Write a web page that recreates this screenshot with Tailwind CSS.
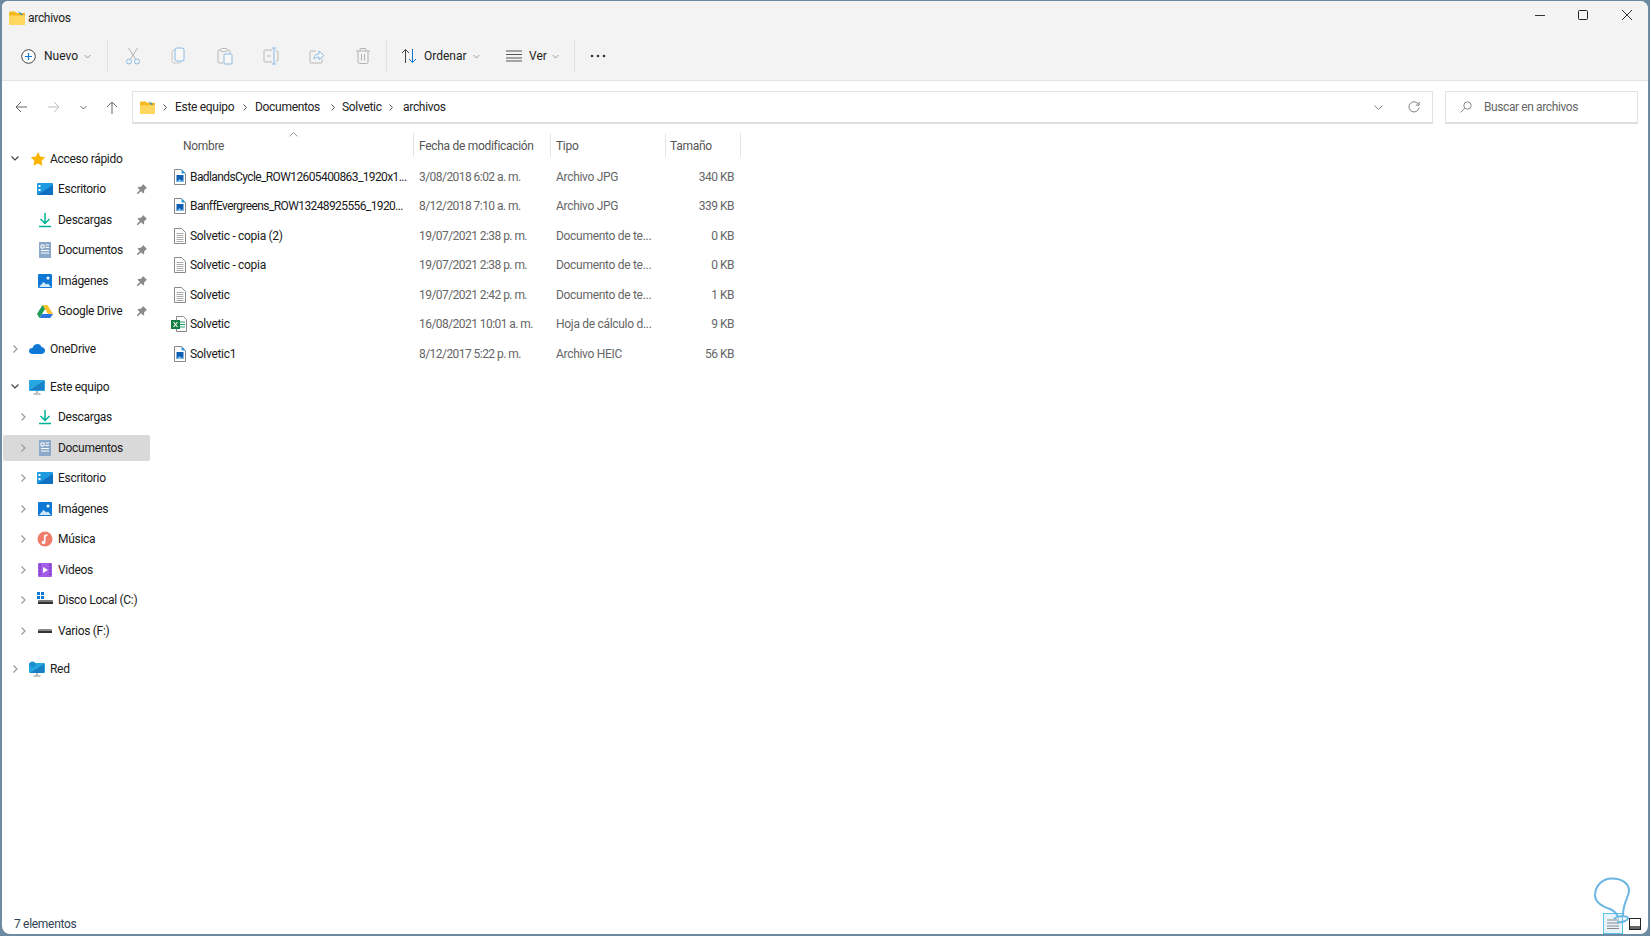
<!doctype html>
<html>
<head>
  <meta charset="UTF-8">
  <script src="https://cdn.jsdelivr.net/npm/@tailwindcss/browser@4"></script>
</head>
<body class="bg-[#6d8ba0] overflow-hidden font-['Roboto',sans-serif] text-[12px] text-[#1a1a1a] whitespace-nowrap tracking-[-0.3px]">

<div class="relative w-[1650px] h-[936px] pl-[2px] pr-[2px] pb-[2px] pt-[1px]">
<div class="relative flex flex-col h-full bg-white rounded-tl-[6px] rounded-tr-[8px] rounded-br-[8px] rounded-bl-[8px] overflow-hidden">

  <!-- title + toolbar -->
  <div class="bg-[#f3f3f3] h-[80px] shrink-0 border-b border-[#e3e3e3]">
    <div class="h-[34px] flex items-center pl-[7px]">
      <svg width="16" height="16" viewBox="0 0 16 16"><path d="M0 3Q0 1.500 1.500 1.500H6L7.500 3H16v10.500q0 1.500-1.500 1.500h-13Q0 15 0 13.500z" fill="#f5b81f"/><path d="M0 5.500h16v8q0 1.500-1.500 1.500h-13Q0 15 0 13.500z" fill="#ffd75e"/><path d="M9 1l5 3.500-2 .8z" fill="#1f93c9"/></svg>
      <span class="ml-[3px] text-[#222]">archivos</span>
    </div>
    <div class="absolute top-0 left-0 w-full h-[34px]">
      <svg class="absolute left-[1533px] top-[12px]" width="10" height="10" viewBox="0 0 10 10"><path d="M0 2.500h10" stroke="#333"/></svg>
      <svg class="absolute left-[1576px] top-[9px]" width="10" height="10" viewBox="0 0 10 10"><rect x=".5" y=".5" width="9" height="9" rx="1" fill="none" stroke="#222"/></svg>
      <svg class="absolute left-[1620px] top-[9px]" width="10" height="10" viewBox="0 0 10 10"><path d="M0 0l10 10M10 0L0 10" stroke="#333"/></svg>
    </div>

    <div class="flex items-center h-[40px] pt-[2px] tracking-normal">
      <div class="flex items-center w-[105px] pl-[19px]">
        <svg width="15" height="15" viewBox="0 0 15 15"><circle cx="7.500" cy="7.500" r="6.800" fill="#fff" stroke="#444"/><path d="M7.500 4v7M4 7.500h7" stroke="#0f78d4" stroke-width="1.200"/></svg>
        <span class="ml-[8px] text-[#222]">Nuevo</span>
        <svg class="ml-[6px]" width="7" height="5" viewBox="0 0 7 5"><path d="M.5 1l3 3 3-3" fill="none" stroke="#999"/></svg>
      </div>
      <div class="w-px h-[32px] bg-[#e2e2e2]"></div>
      <div class="flex items-center w-[278px] pl-[17px] gap-[30px] opacity-45">
        <svg width="16" height="18" viewBox="0 0 16 18"><path d="M3.500 1l7 11M12.500 1l-7 11" stroke="#666" fill="none"/><circle cx="4" cy="14.500" r="2.500" fill="none" stroke="#0f78d4"/><circle cx="12" cy="14.500" r="2.500" fill="none" stroke="#0f78d4"/></svg>
        <svg width="16" height="18" viewBox="0 0 16 18"><rect x="1" y="3" width="9" height="13" rx="2" fill="none" stroke="#999"/><rect x="4" y="1" width="9" height="13" rx="2" fill="#fff" stroke="#0f78d4"/></svg>
        <svg width="16" height="18" viewBox="0 0 16 18"><path d="M4 3H2q-1 0-1 1v11q0 1 1 1h4M10 3h2q1 0 1 1v3" fill="none" stroke="#777"/><rect x="4" y="1.500" width="6" height="3" rx="1" fill="#fff" stroke="#777"/><rect x="7" y="7" width="8" height="10" rx="1" fill="#fff" stroke="#0f78d4"/></svg>
        <svg width="16" height="18" viewBox="0 0 16 18"><path d="M9 3H2q-1 0-1 1v10q0 1 1 1h7M13 4h1q1 0 1 1v8q0 1-1 1h-1" fill="none" stroke="#777"/><path d="M11 1v16M9 1h4M9 17h4" stroke="#0f78d4" fill="none"/><path d="M4 9h4" stroke="#777"/></svg>
        <svg width="16" height="18" viewBox="0 0 16 18"><path d="M7 4H2q-1 0-1 1v10q0 1 1 1h10q1 0 1-1v-3" fill="none" stroke="#777"/><path d="M5 12q0-5 5-5V4l5 4.500-5 4V10q-3 0-5 2z" fill="#fff" stroke="#0f78d4"/></svg>
        <svg width="16" height="18" viewBox="0 0 16 18"><path d="M1 4h14M5 4V2.500Q5 1.500 6 1.500h4q1 0 1 1V4M3 4v11q0 1.500 1.500 1.500h7Q13 16.500 13 15V4M6.500 7v6.500M9.500 7v6.500" fill="none" stroke="#666"/></svg>
      </div>
      <div class="w-px h-[32px] bg-[#e2e2e2]"></div>
      <div class="flex items-center w-[110px] pl-[14px]">
        <svg width="16" height="16" viewBox="0 0 16 16"><path d="M4.500 15V1.500M1 5l3.500-3.500L8 5" fill="none" stroke="#444"/><path d="M11.500 1v13.500M8 11l3.500 3.500L15 11" fill="none" stroke="#0f78d4"/></svg>
        <span class="ml-[7px] w-[43px] text-[#222]">Ordenar</span>
        <svg class="ml-[6px]" width="7" height="5" viewBox="0 0 7 5"><path d="M.5 1l3 3 3-3" fill="none" stroke="#999"/></svg>
      </div>
      <div class="flex items-center w-[77px] pl-[9px]">
        <svg width="16" height="12" viewBox="0 0 16 12"><path d="M0 1h16M0 4.500h16M0 8h16M0 11h16" stroke="#555"/></svg>
        <span class="ml-[7px] w-[17px] text-[#222]">Ver</span>
        <svg class="ml-[6px]" width="7" height="5" viewBox="0 0 7 5"><path d="M.5 1l3 3 3-3" fill="none" stroke="#999"/></svg>
      </div>
      <div class="w-px h-[32px] bg-[#e2e2e2]"></div>
      <svg class="ml-[15px]" width="16" height="4" viewBox="0 0 16 4"><circle cx="2" cy="2" r="1.300" fill="#333"/><circle cx="8" cy="2" r="1.300" fill="#333"/><circle cx="14" cy="2" r="1.300" fill="#333"/></svg>
    </div>
  </div>

  <!-- address row -->
  <div class="flex items-center h-[50px] shrink-0 pl-[13px] pt-[2px]">
    <svg width="12" height="12" viewBox="0 0 12 12"><path d="M6 1L1 6l5 5M1 6h11" fill="none" stroke="#666"/></svg>
    <svg class="ml-[21px]" width="12" height="12" viewBox="0 0 12 12"><path d="M6 1l5 5-5 5M11 6H0" fill="none" stroke="#bbb"/></svg>
    <svg class="ml-[20px]" width="7" height="5" viewBox="0 0 7 5"><path d="M.5 1l3 3 3-3" fill="none" stroke="#666"/></svg>
    <svg class="ml-[19px]" width="12" height="13" viewBox="0 0 12 13"><path d="M1 6l5-5 5 5M6 1v12" fill="none" stroke="#666"/></svg>
    <div class="ml-[14px] w-[1301px] h-[32px] border border-[#e3e3e3] shadow-[0_1px_0_#ddd] flex items-center pl-[7px] text-[#222]">
      <svg width="15" height="15" viewBox="0 0 16 16"><path d="M0 3Q0 1.500 1.500 1.500H6L7.500 3H16v10.500q0 1.500-1.500 1.500h-13Q0 15 0 13.500z" fill="#f5b81f"/><path d="M0 5.500h16v8q0 1.500-1.500 1.500h-13Q0 15 0 13.500z" fill="#ffd75e"/><path d="M9 1l5 3.500-2 .8z" fill="#1f93c9"/></svg>
      <svg class="ml-[8px]" width="4" height="7" viewBox="0 0 4 7"><path d="M.5.5l3 3-3 3" fill="none" stroke="#555"/></svg>
      <span class="ml-[8px] w-[68px]">Este equipo</span>
      <svg width="4" height="7" viewBox="0 0 4 7"><path d="M.5.5l3 3-3 3" fill="none" stroke="#555"/></svg>
      <span class="ml-[8px] w-[76px]">Documentos</span>
      <svg width="4" height="7" viewBox="0 0 4 7"><path d="M.5.5l3 3-3 3" fill="none" stroke="#555"/></svg>
      <span class="ml-[7px] w-[47px]">Solvetic</span>
      <svg width="4" height="7" viewBox="0 0 4 7"><path d="M.5.5l3 3-3 3" fill="none" stroke="#555"/></svg>
      <span class="ml-[10px]">archivos</span>
      <svg class="ml-auto" width="9" height="5" viewBox="0 0 9 5"><path d="M.5.5l4 4 4-4" fill="none" stroke="#888"/></svg>
      <svg class="ml-[25px] mr-[12px]" width="12" height="12" viewBox="0 0 13 13"><path d="M11.500 4A5.500 5.500 0 1 0 12 7" fill="none" stroke="#777"/><path d="M12 1v3.500H8.500" fill="none" stroke="#777"/></svg>
    </div>
    <div class="ml-[12px] w-[193px] h-[32px] border border-[#e3e3e3] shadow-[0_1px_0_#ddd] flex items-center pl-[14px] text-[#666] tracking-[-0.4px]">
      <svg width="12" height="12" viewBox="0 0 12 12"><circle cx="7.500" cy="4.500" r="3.700" fill="none" stroke="#888"/><path d="M4.800 7.200L.5 11.500" stroke="#888"/></svg>
      <span class="ml-[12px]">Buscar en archivos</span>
    </div>
  </div>

  <!-- body -->
  <div class="flex flex-1 min-h-0">
    <!-- nav pane -->
    <nav class="w-[151px] shrink-0 pt-[12.5px]">
      <div class="flex items-center h-[30.5px]">
        <svg class="ml-[9px]" width="8" height="5" viewBox="0 0 8 5"><path d="M.5.5L4 4 7.500.5" fill="none" stroke="#444" stroke-width="1.200"/></svg>
        <svg class="ml-[11px]" width="16" height="16" viewBox="0 0 16 16"><path d="M8 1l2.200 4.600 5 .7-3.600 3.500.9 5L8 12.400l-4.500 2.400.9-5L.8 6.300l5-.7z" fill="#fbb400"/></svg>
        <span class="ml-[4px]">Acceso rápido</span>
      </div>
      <div class="flex items-center h-[30.5px] pl-[35px]">
        <svg width="16" height="14" viewBox="0 0 16 14"><rect y="1" width="16" height="12" rx="1" fill="#1e9be0"/><path d="M0 13L16 3v9q0 1-1 1z" fill="#0f6fc0"/><rect x="1.500" y="3" width="2" height="2" fill="#fff"/><rect x="1.500" y="7" width="2" height="2" fill="#fff"/></svg>
        <span class="ml-[5px] w-[79px]">Escritorio</span>
        <svg width="10" height="10" viewBox="0 0 10 10"><path d="M6 0l4 4-1 .5-2 2 .3 2-1 1-2.200-2.300L1 10l-1 0 0-1 2.800-3.100L.6 3.700l1-1 2 .3 2-2z" fill="#8a8a8a"/></svg>
      </div>
      <div class="flex items-center h-[30.5px] pl-[35px]">
        <svg width="16" height="16" viewBox="0 0 16 16"><path d="M8 1v10M3.500 7L8 11.500 12.500 7M2 14.500h12" fill="none" stroke="#00b294" stroke-width="1.500"/></svg>
        <span class="ml-[5px] w-[79px]">Descargas</span>
        <svg width="10" height="10" viewBox="0 0 10 10"><path d="M6 0l4 4-1 .5-2 2 .3 2-1 1-2.200-2.300L1 10l-1 0 0-1 2.800-3.100L.6 3.700l1-1 2 .3 2-2z" fill="#8a8a8a"/></svg>
      </div>
      <div class="flex items-center h-[30.5px] pl-[35px]">
        <svg width="16" height="16" viewBox="0 0 16 16"><rect x="2" y="0" width="12" height="16" fill="#8aa8c8"/><path d="M4 3h3v3H4zM8.500 3H12M8.500 5.500H12M4 8.500h8M4 11h8" stroke="#fff" fill="none"/></svg>
        <span class="ml-[5px] w-[79px]">Documentos</span>
        <svg width="10" height="10" viewBox="0 0 10 10"><path d="M6 0l4 4-1 .5-2 2 .3 2-1 1-2.200-2.300L1 10l-1 0 0-1 2.800-3.100L.6 3.700l1-1 2 .3 2-2z" fill="#8a8a8a"/></svg>
      </div>
      <div class="flex items-center h-[30.5px] pl-[35px]">
        <svg width="16" height="16" viewBox="0 0 16 16"><rect x="1" y="1" width="14" height="14" rx="1" fill="#0f78d4"/><path d="M2 14l4.500-5 3 2.500 1.500-1 3 3.500z" fill="#cfe9fb"/><circle cx="11" cy="5" r="1.500" fill="#fff"/></svg>
        <span class="ml-[5px] w-[79px]">Imágenes</span>
        <svg width="10" height="10" viewBox="0 0 10 10"><path d="M6 0l4 4-1 .5-2 2 .3 2-1 1-2.200-2.300L1 10l-1 0 0-1 2.800-3.100L.6 3.700l1-1 2 .3 2-2z" fill="#8a8a8a"/></svg>
      </div>
      <div class="flex items-center h-[30.5px] pl-[35px]">
        <svg width="16" height="15" viewBox="0 0 16 15"><path d="M5.500 1h5L16 10h-5z" fill="#fbc02d"/><path d="M5.500 1L0 10l2.500 4L8 5z" fill="#1f9d55"/><path d="M2.500 14h10.800L16 10H5z" fill="#2b78e4"/></svg>
        <span class="ml-[5px] w-[79px]">Google Drive</span>
        <svg width="10" height="10" viewBox="0 0 10 10"><path d="M6 0l4 4-1 .5-2 2 .3 2-1 1-2.200-2.300L1 10l-1 0 0-1 2.800-3.100L.6 3.700l1-1 2 .3 2-2z" fill="#8a8a8a"/></svg>
      </div>

      <div class="flex items-center h-[30.5px] mt-[7px]">
        <svg class="ml-[11px]" width="5" height="8" viewBox="0 0 5 8"><path d="M.5.5L4 4 .5 7.500" fill="none" stroke="#999" stroke-width="1.200"/></svg>
        <svg class="ml-[11px]" width="16" height="11" viewBox="0 0 16 11"><path d="M4 11Q0 11 0 8t3.500-3Q5 1 8.500 1q3 0 4 3 3.500.5 3.500 3.500t-3.500 3.500z" fill="#0f78d4"/></svg>
        <span class="ml-[5px]">OneDrive</span>
      </div>
      <div class="flex items-center h-[30.5px] mt-[7.5px]">
        <svg class="ml-[9px]" width="8" height="5" viewBox="0 0 8 5"><path d="M.5.5L4 4 7.500.5" fill="none" stroke="#444" stroke-width="1.200"/></svg>
        <svg class="ml-[10px]" width="16" height="16" viewBox="0 0 16 16"><rect y="1" width="16" height="11" rx="1" fill="#27a6e0"/><path d="M1 11L15 2v9z" fill="#1a7fc4"/><path d="M8 12v2M4.500 15h7" stroke="#888" stroke-width="1.200"/></svg>
        <span class="ml-[5px]">Este equipo</span>
      </div>
      <div class="flex items-center h-[30.5px] pl-[19px]">
        <svg width="5" height="8" viewBox="0 0 5 8"><path d="M.5.5L4 4 .5 7.500" fill="none" stroke="#999" stroke-width="1.200"/></svg>
        <svg class="ml-[11px]" width="16" height="16" viewBox="0 0 16 16"><path d="M8 1v10M3.500 7L8 11.500 12.500 7M2 14.500h12" fill="none" stroke="#00b294" stroke-width="1.500"/></svg>
        <span class="ml-[5px]">Descargas</span>
      </div>
      <div class="h-[30.5px] py-[2px]">
        <div class="flex items-center h-full w-[147px] ml-[1px] pl-[18px] bg-[#d9d9d9] rounded-[2px]">
          <svg width="5" height="8" viewBox="0 0 5 8"><path d="M.5.5L4 4 .5 7.500" fill="none" stroke="#999" stroke-width="1.200"/></svg>
          <svg class="ml-[11px]" width="16" height="16" viewBox="0 0 16 16"><rect x="2" y="0" width="12" height="16" fill="#8aa8c8"/><path d="M4 3h3v3H4zM8.500 3H12M8.500 5.500H12M4 8.500h8M4 11h8" stroke="#fff" fill="none"/></svg>
          <span class="ml-[5px]">Documentos</span>
        </div>
      </div>
      <div class="flex items-center h-[30.5px] pl-[19px]">
        <svg width="5" height="8" viewBox="0 0 5 8"><path d="M.5.5L4 4 .5 7.500" fill="none" stroke="#999" stroke-width="1.200"/></svg>
        <svg class="ml-[11px]" width="16" height="14" viewBox="0 0 16 14"><rect y="1" width="16" height="12" rx="1" fill="#1e9be0"/><path d="M0 13L16 3v9q0 1-1 1z" fill="#0f6fc0"/><rect x="1.500" y="3" width="2" height="2" fill="#fff"/><rect x="1.500" y="7" width="2" height="2" fill="#fff"/></svg>
        <span class="ml-[5px]">Escritorio</span>
      </div>
      <div class="flex items-center h-[30.5px] pl-[19px]">
        <svg width="5" height="8" viewBox="0 0 5 8"><path d="M.5.5L4 4 .5 7.500" fill="none" stroke="#999" stroke-width="1.200"/></svg>
        <svg class="ml-[11px]" width="16" height="16" viewBox="0 0 16 16"><rect x="1" y="1" width="14" height="14" rx="1" fill="#0f78d4"/><path d="M2 14l4.500-5 3 2.500 1.500-1 3 3.500z" fill="#cfe9fb"/><circle cx="11" cy="5" r="1.500" fill="#fff"/></svg>
        <span class="ml-[5px]">Imágenes</span>
      </div>
      <div class="flex items-center h-[30.5px] pl-[19px]">
        <svg width="5" height="8" viewBox="0 0 5 8"><path d="M.5.5L4 4 .5 7.500" fill="none" stroke="#999" stroke-width="1.200"/></svg>
        <svg class="ml-[11px]" width="16" height="16" viewBox="0 0 16 16"><circle cx="8" cy="8" r="7.500" fill="#f07c6c"/><path d="M7 11.500V4l3.500-.8V5L8.500 5.500v6" fill="#fff"/><circle cx="6.500" cy="11.500" r="1.800" fill="#fff"/></svg>
        <span class="ml-[5px]">Música</span>
      </div>
      <div class="flex items-center h-[30.5px] pl-[19px]">
        <svg width="5" height="8" viewBox="0 0 5 8"><path d="M.5.5L4 4 .5 7.500" fill="none" stroke="#999" stroke-width="1.200"/></svg>
        <svg class="ml-[11px]" width="16" height="16" viewBox="0 0 16 16"><rect x="1" y="1" width="14" height="14" rx="1" fill="#a35de8"/><path d="M6 5l5 3-5 3z" fill="#fff"/><path d="M2 3h2M2 6h2M2 9h2M2 12h2M12 3h2M12 6h2M12 9h2M12 12h2" stroke="#5b2a9e"/></svg>
        <span class="ml-[5px]">Videos</span>
      </div>
      <div class="flex items-center h-[30.5px] pl-[19px]">
        <svg width="5" height="8" viewBox="0 0 5 8"><path d="M.5.5L4 4 .5 7.500" fill="none" stroke="#999" stroke-width="1.200"/></svg>
        <svg class="ml-[11px]" width="16" height="16" viewBox="0 0 16 16"><rect x="0" y="0" width="3" height="3" fill="#0f78d4"/><rect x="4" y="0" width="3" height="3" fill="#0f78d4"/><rect x="0" y="4" width="3" height="3" fill="#0f78d4"/><rect x="4" y="4" width="3" height="3" fill="#0f78d4"/><rect x="1" y="8" width="15" height="4" rx="1" fill="#777"/><rect x="1" y="10" width="15" height="2" fill="#333"/></svg>
        <span class="ml-[5px]">Disco Local (C:)</span>
      </div>
      <div class="flex items-center h-[30.5px] pl-[19px]">
        <svg width="5" height="8" viewBox="0 0 5 8"><path d="M.5.5L4 4 .5 7.500" fill="none" stroke="#999" stroke-width="1.200"/></svg>
        <svg class="ml-[11px]" width="16" height="16" viewBox="0 0 16 16"><rect x="1" y="6" width="14" height="4" rx="1" fill="#888"/><rect x="1" y="8" width="14" height="2" fill="#333"/></svg>
        <span class="ml-[5px]">Varios (F:)</span>
      </div>
      <div class="flex items-center h-[30.5px] mt-[7.5px]">
        <svg class="ml-[11px]" width="5" height="8" viewBox="0 0 5 8"><path d="M.5.5L4 4 .5 7.500" fill="none" stroke="#999" stroke-width="1.200"/></svg>
        <svg class="ml-[11px]" width="16" height="16" viewBox="0 0 16 16"><rect y="2" width="16" height="10" rx="1" fill="#27a6e0"/><path d="M1 12L15 3v9z" fill="#1a7fc4"/><circle cx="3.500" cy="3.500" r="3" fill="#1f8fcf"/><path d="M8 12v2M4.500 15h7" stroke="#888" stroke-width="1.200"/></svg>
        <span class="ml-[5px]">Red</span>
      </div>
    </nav>

    <!-- file list -->
    <main class="flex-1 relative pt-[2px]">
      <svg class="absolute left-[136px] top-[1px]" width="9" height="5" viewBox="0 0 9 5"><path d="M.5 4.500l4-4 4 4" fill="none" stroke="#999"/></svg>
      <div class="grid grid-cols-[260px_137px_115px_76px] h-[24px] w-[588px] items-center text-[#555]">
        <div class="pl-[30px] pt-[2px] h-full flex items-center">Nombre</div>
        <div class="pl-[5px] pt-[2px] h-full flex items-center border-l border-[#e5e5e5]">Fecha de modificación</div>
        <div class="pl-[5px] pt-[2px] h-full flex items-center border-l border-[#e5e5e5]">Tipo</div>
        <div class="pl-[4px] pt-[2px] h-full flex items-center border-l border-r border-[#e5e5e5]">Tamaño</div>
      </div>

      <div class="grid grid-cols-[260px_137px_115px_76px] w-[588px] auto-rows-[29.5px] items-center mt-[5px] text-[#666]">
        <div class="flex items-center pl-[20px] text-[#1a1a1a]"><svg class="shrink-0" width="14" height="16" viewBox="0 0 14 16"><path d="M1.500.5h7l4 4v11h-11z" fill="#fff" stroke="#888"/><path d="M8.500.5l4 4h-4z" fill="#2b9be0"/><rect x="3.500" y="6" width="7" height="7" fill="#0f5fb0"/><path d="M3.500 13l3-3 2 2 2-1v2z" fill="#7cc0f0"/></svg><span class="ml-[3px] tracking-[-0.6px]">BadlandsCycle_ROW12605400863_1920x1...</span></div>
        <div class="pl-[6px] tracking-[-0.55px]">3/08/2018 6:02 a. m.</div><div class="pl-[6px]">Archivo JPG</div><div class="pr-[7px] text-right tracking-[-0.5px]">340 KB</div>

        <div class="flex items-center pl-[20px] text-[#1a1a1a]"><svg class="shrink-0" width="14" height="16" viewBox="0 0 14 16"><path d="M1.500.5h7l4 4v11h-11z" fill="#fff" stroke="#888"/><path d="M8.500.5l4 4h-4z" fill="#2b9be0"/><rect x="3.500" y="6" width="7" height="7" fill="#0f5fb0"/><path d="M3.500 13l3-3 2 2 2-1v2z" fill="#7cc0f0"/></svg><span class="ml-[3px] tracking-[-0.6px]">BanffEvergreens_ROW13248925556_1920...</span></div>
        <div class="pl-[6px] tracking-[-0.55px]">8/12/2018 7:10 a. m.</div><div class="pl-[6px]">Archivo JPG</div><div class="pr-[7px] text-right tracking-[-0.5px]">339 KB</div>

        <div class="flex items-center pl-[20px] text-[#1a1a1a]"><svg class="shrink-0" width="14" height="16" viewBox="0 0 14 16"><path d="M1.500.5h7l4 4v11h-11z" fill="#fff" stroke="#888"/><path d="M3.500 5.500h7M3.500 7.500h7M3.500 9.500h7M3.500 11.500h7M3.500 13.500h7" stroke="#aaa"/></svg><span class="ml-[3px]">Solvetic - copia (2)</span></div>
        <div class="pl-[6px] tracking-[-0.55px]">19/07/2021 2:38 p. m.</div><div class="pl-[6px]">Documento de te...</div><div class="pr-[7px] text-right tracking-[-0.5px]">0 KB</div>

        <div class="flex items-center pl-[20px] text-[#1a1a1a]"><svg class="shrink-0" width="14" height="16" viewBox="0 0 14 16"><path d="M1.500.5h7l4 4v11h-11z" fill="#fff" stroke="#888"/><path d="M3.500 5.500h7M3.500 7.500h7M3.500 9.500h7M3.500 11.500h7M3.500 13.500h7" stroke="#aaa"/></svg><span class="ml-[3px]">Solvetic - copia</span></div>
        <div class="pl-[6px] tracking-[-0.55px]">19/07/2021 2:38 p. m.</div><div class="pl-[6px]">Documento de te...</div><div class="pr-[7px] text-right tracking-[-0.5px]">0 KB</div>

        <div class="flex items-center pl-[20px] text-[#1a1a1a]"><svg class="shrink-0" width="14" height="16" viewBox="0 0 14 16"><path d="M1.500.5h7l4 4v11h-11z" fill="#fff" stroke="#888"/><path d="M3.500 5.500h7M3.500 7.500h7M3.500 9.500h7M3.500 11.500h7M3.500 13.500h7" stroke="#aaa"/></svg><span class="ml-[3px]">Solvetic</span></div>
        <div class="pl-[6px] tracking-[-0.55px]">19/07/2021 2:42 p. m.</div><div class="pl-[6px]">Documento de te...</div><div class="pr-[7px] text-right tracking-[-0.5px]">1 KB</div>

        <div class="flex items-center pl-[18px] text-[#1a1a1a]"><svg class="shrink-0" width="16" height="16" viewBox="0 0 16 16"><path d="M5.500.5h7l3 3v12h-10z" fill="#fff" stroke="#888"/><path d="M9 6h5M9 8.500h5M9 11h5" stroke="#21a366"/><rect x="0" y="4" width="9" height="9" fill="#107c41"/><path d="M2.500 6l4 5M6.500 6l-4 5" stroke="#fff" stroke-width="1.100"/></svg><span class="ml-[3px]">Solvetic</span></div>
        <div class="pl-[6px] tracking-[-0.55px]">16/08/2021 10:01 a. m.</div><div class="pl-[6px]">Hoja de cálculo d...</div><div class="pr-[7px] text-right tracking-[-0.5px]">9 KB</div>

        <div class="flex items-center pl-[20px] text-[#1a1a1a]"><svg class="shrink-0" width="14" height="16" viewBox="0 0 14 16"><path d="M1.500.5h7l4 4v11h-11z" fill="#fff" stroke="#888"/><path d="M8.500.5l4 4h-4z" fill="#2b9be0"/><rect x="3.500" y="6" width="7" height="7" fill="#0f5fb0"/><path d="M3.500 13l3-3 2 2 2-1v2z" fill="#7cc0f0"/></svg><span class="ml-[3px]">Solvetic1</span></div>
        <div class="pl-[6px] tracking-[-0.55px]">8/12/2017 5:22 p. m.</div><div class="pl-[6px]">Archivo HEIC</div><div class="pr-[7px] text-right tracking-[-0.5px]">56 KB</div>
      </div>
    </main>
  </div>

  <!-- status bar -->
  <div class="h-[20px] shrink-0 pl-[12px] text-[#2f3f55] flex items-center">7 elementos</div>

  <!-- view toggles -->
  <div class="absolute left-[1601px] top-[912px] flex items-center">
    <div class="w-[20px] h-[21px] border border-[#5fc0e8] bg-[#e8f4fb] flex items-center justify-center">
      <svg width="12" height="10" viewBox="0 0 12 10"><path d="M0 1h12M0 4h12M0 7h12M0 9.500h12" stroke="#888"/></svg>
    </div>
    <svg class="ml-[6px]" width="12" height="12" viewBox="0 0 12 12"><rect x=".5" y=".5" width="11" height="11" fill="#fff" stroke="#222"/><rect x="1" y="8" width="10" height="3" fill="#666"/></svg>
  </div>
  <!-- hand-drawn marker over the toggle -->
  <svg class="absolute left-[1588px] top-[874px]" width="48" height="60" viewBox="0 0 48 60" fill="none"><path d="M28 42c-1-3-4-6-8-8-6-2-14-5-15-13C5 11 12 3.500 22 3.500c10 0 17 5 17 12 0 7-6 11-6 25 M24 44c3-3 13-4 14-1 0 3-8 5-11 4" stroke="#6cb6e4" stroke-width="2"/></svg>
</div>
</div>
</body>
</html>
